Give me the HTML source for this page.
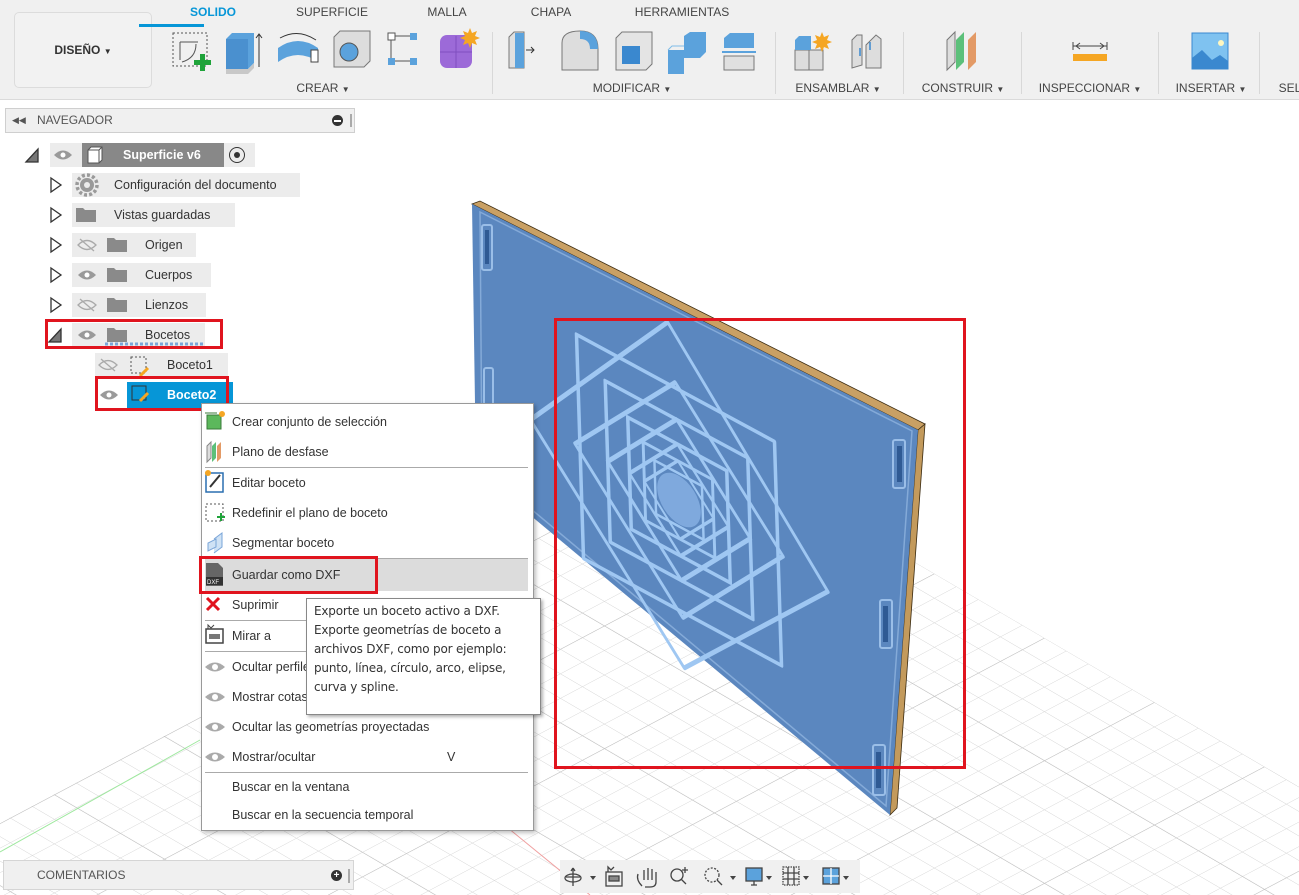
<!DOCTYPE html>
<html><head><meta charset="utf-8">
<style>
*{margin:0;padding:0;box-sizing:border-box}
body{width:1299px;height:895px;overflow:hidden;background:#fff;font-family:"Liberation Sans",Arial,sans-serif;color:#3c3c3c;position:relative}
.abs{position:absolute}
#tb{left:0;top:0;width:1299px;height:100px;background:#f0f0f0;border-bottom:1px solid #dadada}
.tab{position:absolute;top:5px;font-size:12px;color:#444;transform:translateX(-50%)}
.grp{position:absolute;top:81px;font-size:12px;color:#444;transform:translateX(-50%);white-space:nowrap}
.sep{position:absolute;top:32px;width:1px;height:62px;background:#d8d8d8}
.row{position:absolute;height:24px;background:#ececec;font-size:12.5px;line-height:24px;color:#333}
.mi{position:absolute;left:232px;font-size:12.5px;color:#333;transform:translateY(-50%)}
.ms{position:absolute;left:205px;width:323px;height:1px;background:#aaa}
.red{position:absolute;border:3px solid #e0141e}
</style></head><body>

<!-- viewport -->
<svg class="abs" style="left:0;top:0" width="1299" height="895">
<defs>
<pattern id="g" width="22" height="22" patternUnits="userSpaceOnUse" patternTransform="matrix(1,0.585,1,-0.53,714,445)">
<path d="M0 0H22M0 0V22" stroke="#d2d2d2" stroke-width="0.8" fill="none"/>
</pattern>
<pattern id="g2" width="110" height="110" patternUnits="userSpaceOnUse" patternTransform="matrix(1,0.585,1,-0.53,714,445)">
<path d="M0 0H110M0 0V110" stroke="#bdbdbd" stroke-width="1" fill="none"/>
</pattern>
</defs>
<polygon points="714,445 1299,787 1299,895 0,895 0,823" fill="url(#g)"/>
<polygon points="714,445 1299,787 1299,895 0,895 0,823" fill="url(#g2)"/>
<line x1="0" y1="852" x2="200" y2="740" stroke="#9ee89e" stroke-width="1"/>
<line x1="508" y1="828" x2="590" y2="895" stroke="#f0a0a0" stroke-width="1"/>
<!-- panel -->
<polygon points="472,204 480,201 925,424 918,430" fill="#c9a064" stroke="#3a2a10" stroke-width="0.8"/>
<polygon points="918,430 925,424 897,808 890,815" fill="#c39a5c" stroke="#3a2a10" stroke-width="0.8"/>
<polygon points="472,204 918,430 890,815 476,470" fill="#5b87bf"/>
<polygon points="480,212 912,431 886,806 482,468" fill="none" stroke="#8fb3de" stroke-width="1.5" opacity="0.8"/>
<g fill="none" stroke="#a6c8ee" stroke-width="2" opacity="0.85">
<rect x="482" y="225" width="10" height="45" rx="2"/><rect x="484" y="368" width="9" height="40" rx="2"/>
<rect x="893" y="440" width="12" height="48" rx="2"/><rect x="880" y="600" width="12" height="48" rx="2"/><rect x="873" y="745" width="12" height="50" rx="2"/>
</g>
<g fill="#2f5a94"><rect x="485" y="230" width="4" height="34"/><rect x="897" y="446" width="5" height="36"/><rect x="883" y="606" width="5" height="36"/><rect x="876" y="752" width="5" height="36"/></g>
<g transform="matrix(0.99,0.535,0.035,1.12,679,500)" fill="none" stroke="#9fc7f2" stroke-width="3.6" stroke-linejoin="round">
<rect x="-100" y="-100" width="200" height="200"/>
<polygon points="-6,-156 150,10 0,150 -150,0"/>
<rect x="-72" y="-72" width="144" height="144"/>
<polygon points="0,-105 105,0 0,105 -105,0"/>
<rect x="-50" y="-50" width="100" height="100"/>
<polygon points="0,-72 72,0 0,72 -72,0"/>
<rect x="-35" y="-35" width="70" height="70" stroke-width="3"/>
<polygon points="0,-50 50,0 0,50 -50,0" stroke-width="3"/>
<rect x="-24" y="-24" width="48" height="48" stroke-width="2.5"/>
<polygon points="0,-35 35,0 0,35 -35,0" stroke-width="2.5"/>
<circle r="22" fill="#8fb8ea" stroke="none" opacity="0.7"/>
</g>
</svg>

<!-- toolbar -->
<div id="tb" class="abs">
<div class="abs" style="left:14px;top:12px;width:138px;height:76px;border:1px solid #dcdcdc;border-radius:5px;background:#f2f2f2;font-size:12px;font-weight:bold;line-height:74px;text-align:center;color:#333">DISEÑO <span style="font-size:8px">▼</span></div>
<div class="tab" style="left:213px;color:#0696d7;font-weight:bold">SOLIDO</div>
<div class="abs" style="left:139px;top:24px;width:65px;height:3px;background:#0696d7"></div>
<div class="tab" style="left:332px">SUPERFICIE</div>
<div class="tab" style="left:447px">MALLA</div>
<div class="tab" style="left:551px">CHAPA</div>
<div class="tab" style="left:682px">HERRAMIENTAS</div>
<div class="grp" style="left:323px">CREAR <span style="font-size:8px">▼</span></div>
<div class="grp" style="left:632px">MODIFICAR <span style="font-size:8px">▼</span></div>
<div class="grp" style="left:838px">ENSAMBLAR <span style="font-size:8px">▼</span></div>
<div class="grp" style="left:963px">CONSTRUIR <span style="font-size:8px">▼</span></div>
<div class="grp" style="left:1090px">INSPECCIONAR <span style="font-size:8px">▼</span></div>
<div class="grp" style="left:1211px">INSERTAR <span style="font-size:8px">▼</span></div>
<div class="grp" style="left:1290px">SEL</div>
<div class="sep" style="left:492px"></div><div class="sep" style="left:775px"></div><div class="sep" style="left:903px"></div><div class="sep" style="left:1021px"></div><div class="sep" style="left:1158px"></div><div class="sep" style="left:1259px"></div>
<svg class="abs" style="left:0;top:0" width="1299" height="100">
<g stroke="#555" fill="none"><rect x="173" y="33" width="34" height="33" stroke-dasharray="2 2"/><path d="M180 42V60M180 42H198M196 44Q196 58 182 62"/></g>
<path d="M200 54h5v6h6v5h-6v6h-5v-6h-6v-5h6z" fill="#1fa33a"/>
<path d="M226 39l6-6h22v30l-6 6h-22z" fill="#5ba2dc"/><path d="M226 39h22v30h-22z" fill="#4a90cf"/><path d="M226 69h22l6-6v5l-6 6h-22z" fill="#c8c8c8"/><path d="M259 67V34m-3 4l3-4 3 4" stroke="#333" fill="none"/>
<path d="M278 48q20-14 40 0v14q-20-14-40 0z" fill="#5ba2dc"/><path d="M280 38q18-10 36 2" stroke="#333" fill="none"/><rect x="311" y="50" width="7" height="12" fill="#fff" stroke="#444"/>
<path d="M334 37l6-6h30v30l-6 6h-30z" fill="#ddd" stroke="#777"/><circle cx="349" cy="52" r="9" fill="#5ba2dc" stroke="#555"/>
<g fill="#5ba2dc"><rect x="410" y="33" width="7" height="7"/><rect x="388" y="58" width="7" height="7"/><rect x="410" y="58" width="7" height="7"/></g><rect x="388" y="33" width="7" height="7" fill="#fff" stroke="#555"/><path d="M395 36h15M395 61h15M391 40v18" stroke="#555"/>
<rect x="440" y="35" width="32" height="33" rx="7" fill="#9c6ad8"/><path d="M440 52h32M456 36v32" stroke="#7f4fbf"/><path d="M470 28l2 5 5-2-2 5 5 2-5 2 2 5-5-2-2 5-2-5-5 2 2-5-5-2 5-2-2-5 5 2z" fill="#f5a623"/>
<path d="M509 37l5-5h10v36h-15z" fill="#e0e0e0" stroke="#777"/><rect x="515" y="33" width="9" height="35" fill="#5ba2dc"/><path d="M526 50h8m-3-3l3 3-3 3" stroke="#333" fill="none"/>
<path d="M562 70V43q0-12 18-12q18 0 18 18v21z" fill="#ddd" stroke="#777"/><path d="M580 31q18 0 18 18h-8q0-10-10-10z" fill="#5ba2dc"/>
<path d="M616 38l6-6h30v32l-6 6h-30z" fill="#e4e4e4" stroke="#777"/><rect x="622" y="46" width="18" height="18" fill="#3a88cf"/>
<path d="M668 50h16v-14l6-4h16v20l-6 6h-16v16h-16z" fill="#5ba2dc"/><path d="M668 50l4-4h12" stroke="#7fbde8" fill="none"/>
<path d="M724 38l6-5h24v15h-30z" fill="#5ba2dc"/><path d="M722 52h34" stroke="#5ba2dc" stroke-width="2"/><path d="M724 56h30v14h-30z" fill="#e0e0e0" stroke="#777"/>
<rect x="795" y="50" width="14" height="20" fill="#ddd" stroke="#777"/><rect x="809" y="50" width="14" height="20" fill="#ddd" stroke="#777"/><path d="M795 40l4-4h12v14h-16z" fill="#5ba2dc"/><path d="M822 32l2 5 5-2-2 5 5 2-5 2 2 5-5-2-2 5-2-5-5 2 2-5-5-2 5-2-2-5 5 2z" fill="#f5a623"/>
<path d="M852 68V40l5-5h5v30zM866 45l10-10 5 4v29h-15z" fill="#ddd" stroke="#777"/><path d="M860 48v8M870 42v8" stroke="#3a88cf" stroke-width="1.5"/>
<path d="M947 70V40l8-8v30z" fill="#ddd" stroke="#777"/><path d="M956 70V40l8-8v30z" fill="#5cc07a"/><path d="M968 70V40l8-8v30z" fill="#e39a66"/>
<path d="M1073 46h34M1073 42v8M1107 42v8M1076 46l4-3M1076 46l4 3M1104 46l-4-3M1104 46l-4 3" stroke="#444" fill="none"/><rect x="1073" y="54" width="34" height="7" fill="#f5a623"/>
<rect x="1192" y="33" width="36" height="36" fill="#7fc2f0" stroke="#3a88cf"/><path d="M1192 69V58l10-8 10 10 8-5 8 6v8z" fill="#3a88cf"/><circle cx="1221" cy="43" r="3" fill="#fff7c0"/>
</svg>
</div>

<!-- navigator -->
<div class="abs" style="left:5px;top:108px;width:350px;height:25px;background:#f0f0f0;border:1px solid #cfcfcf;font-size:12px;line-height:23px;color:#555">
<span style="position:absolute;left:6px;font-size:9px">◀◀</span><span style="position:absolute;left:31px">NAVEGADOR</span>
<span style="position:absolute;left:326px;top:6px;width:11px;height:11px;border-radius:50%;background:#333"></span><span style="position:absolute;left:328px;top:11px;width:7px;height:1.5px;background:#fff"></span>
<span style="position:absolute;left:344px;top:5px;width:2px;height:13px;background:#aaa"></span></div>

<svg class="abs" style="left:0;top:140px" width="300" height="280">
<g fill="none" stroke="#333" stroke-width="1.3">
<path d="M26 22L38 9V22Z" fill="#777"/>
<path d="M51 38l10 7-10 7z"/><path d="M51 68l10 7-10 7z"/><path d="M51 98l10 7-10 7z"/><path d="M51 128l10 7-10 7z"/><path d="M51 158l10 7-10 7z"/>
<path d="M49 202L61 189V202Z" fill="#777"/>
</g>
</svg>
<div class="row" style="left:50px;top:143px;width:205px"></div>
<div class="abs" style="left:82px;top:143px;width:142px;height:24px;background:#888;color:#fff;font-weight:bold;font-size:12.5px;line-height:24px;padding-left:41px">Superficie v6</div>
<svg class="abs" style="left:84px;top:144px" width="22" height="22"><path d="M4 6l3-3h11v13l-3 3H4z" fill="#fff" stroke="#555"/><path d="M4 6h11v13M15 6l3-3" stroke="#555" fill="none"/></svg>
<div class="abs" style="left:229px;top:147px;width:16px;height:16px;border-radius:50%;border:1.5px solid #333"></div><div class="abs" style="left:234px;top:152px;width:6px;height:6px;border-radius:50%;background:#333"></div>
<div class="row" style="left:72px;top:173px;width:228px;padding-left:42px">Configuración del documento</div>
<div class="row" style="left:72px;top:203px;width:163px;padding-left:42px">Vistas guardadas</div>
<div class="row" style="left:72px;top:233px;width:124px;padding-left:73px">Origen</div>
<div class="row" style="left:72px;top:263px;width:139px;padding-left:73px">Cuerpos</div>
<div class="row" style="left:72px;top:293px;width:134px;padding-left:73px">Lienzos</div>
<div class="row" style="left:72px;top:323px;width:133px;padding-left:73px">Bocetos</div>
<div class="row" style="left:95px;top:353px;width:133px;padding-left:72px">Boceto1</div>
<div class="abs" style="left:127px;top:382px;width:106px;height:26px;background:#0696d7;color:#fff;font-weight:bold;font-size:12.5px;line-height:26px;padding-left:40px">Boceto2</div>
<svg class="abs" style="left:0;top:140px" width="300" height="280">
<circle cx="87" cy="45" r="7" fill="#9a9a9a"/><circle cx="87" cy="45" r="10" fill="none" stroke="#9a9a9a" stroke-width="3.5" stroke-dasharray="3 2.2"/><circle cx="87" cy="45" r="3" fill="#ececec"/>
<g fill="#8a8a8a"><path d="M76 68h7l2 2h11v12h-20z"/><path d="M107 128h7l2 2h11v12h-20z"/><path d="M107 158h7l2 2h11v12h-20z"/><path d="M107 98h7l2 2h11v12h-20z"/><path d="M107 188h7l2 2h11v12h-20z"/></g>
<g fill="#9a9a9a"><path d="M54 15q9-9 18 0q-9 9-18 0z"/><path d="M78 135q9-9 18 0q-9 9-18 0z"/><path d="M78 195q9-9 18 0q-9 9-18 0z"/><path d="M100 255q9-9 18 0q-9 9-18 0z"/></g>
<g fill="#fff"><circle cx="63" cy="15" r="2.5"/><circle cx="87" cy="135" r="2.5"/><circle cx="87" cy="195" r="2.5"/><circle cx="109" cy="255" r="2.5"/></g>
<g fill="none" stroke="#aaa" stroke-width="1.3"><path d="M78 105q9-9 18 0q-9 9-18 0zM80 99l14 12"/><path d="M78 165q9-9 18 0q-9 9-18 0zM80 159l14 12"/><path d="M99 225q9-9 18 0q-9 9-18 0zM101 219l14 12"/></g>
<path d="M105 204h100" stroke="#7aa5d8" stroke-width="3" stroke-dasharray="3 2"/>
<rect x="131" y="217" width="15" height="16" fill="none" stroke="#555" stroke-dasharray="2 2"/><path d="M140 236l8-8" stroke="#f5a623" stroke-width="3"/>
<rect x="132" y="246" width="14" height="14" fill="none" stroke="#333"/><path d="M140 261l8-8" stroke="#f5a623" stroke-width="3"/>
</svg>
<div class="red" style="left:45px;top:319px;width:178px;height:30px"></div>
<div class="red" style="left:95px;top:376px;width:134px;height:35px"></div>

<!-- context menu -->
<div class="abs" style="left:201px;top:403px;width:333px;height:428px;background:#fff;border:1px solid #999;box-shadow:2px 2px 4px rgba(0,0,0,.25)"></div>
<div class="abs" style="left:205px;top:559px;width:323px;height:32px;background:#dcdcdc"></div>
<div class="ms" style="top:467px"></div><div class="ms" style="top:558px"></div><div class="ms" style="top:620px"></div><div class="ms" style="top:651px"></div><div class="ms" style="top:772px"></div>
<div class="mi" style="top:422px">Crear conjunto de selección</div>
<div class="mi" style="top:452px">Plano de desfase</div>
<div class="mi" style="top:483px">Editar boceto</div>
<div class="mi" style="top:513px">Redefinir el plano de boceto</div>
<div class="mi" style="top:543px">Segmentar boceto</div>
<div class="mi" style="top:575px">Guardar como DXF</div>
<div class="mi" style="top:605px">Suprimir</div>
<div class="mi" style="top:636px">Mirar a</div>
<div class="mi" style="top:667px">Ocultar perfiles</div>
<div class="mi" style="top:697px">Mostrar cotas</div>
<div class="mi" style="top:727px">Ocultar las geometrías proyectadas</div>
<div class="mi" style="top:757px">Mostrar/ocultar</div>
<div class="mi" style="top:757px;left:447px">V</div>
<div class="mi" style="top:787px">Buscar en la ventana</div>
<div class="mi" style="top:815px">Buscar en la secuencia temporal</div>
<svg class="abs" style="left:200px;top:405px" width="35" height="400">
<rect x="7" y="10" width="14" height="14" fill="#5cb85c" stroke="#3a7a3a"/><path d="M5 8h12" stroke="#3a7a3a"/><circle cx="22" cy="9" r="3" fill="#f5a623"/>
<path d="M7 57V41l4-4v16z" fill="#ddd" stroke="#888"/><path d="M12 57V41l4-4v16z" fill="#5cc07a"/><path d="M17 57V41l4-4v16z" fill="#e39a66"/>
<rect x="6" y="68" width="17" height="19" fill="#fff" stroke="#2a6fb0" stroke-width="1.5"/><path d="M10 82l10-12" stroke="#333" stroke-width="2"/><circle cx="8" cy="68" r="3" fill="#f5a623"/>
<rect x="6" y="99" width="17" height="17" fill="none" stroke="#555" stroke-dasharray="2 2"/><path d="M17 112h8M21 108v8" stroke="#1fa33a" stroke-width="2"/>
<path d="M8 146v-8l8-4v8zM14 134l8-6v14l-8 6" fill="#cfe2f5" stroke="#7aa5d8"/>
<path d="M6 158h12l5 5v18h-17z" fill="#666"/><rect x="6" y="172" width="17" height="8" fill="#333"/><text x="7" y="179" font-size="6" fill="#fff" font-family="Liberation Sans">DXF</text>
<path d="M7 193l12 12M19 193l-12 12" stroke="#e0141e" stroke-width="3"/>
<rect x="6" y="224" width="17" height="14" fill="#fff" stroke="#444" stroke-width="1.5"/><rect x="9" y="229" width="11" height="5" fill="#777"/><path d="M8 224v-4l3 3 3-3" stroke="#444" fill="none"/>
<g fill="#aaa"><path d="M5 262q10-9 20 0q-10 9-20 0z"/><path d="M5 292q10-9 20 0q-10 9-20 0z"/><path d="M5 322q10-9 20 0q-10 9-20 0z"/><path d="M5 352q10-9 20 0q-10 9-20 0z"/></g>
<g fill="#fff"><circle cx="15" cy="262" r="3"/><circle cx="15" cy="292" r="3"/><circle cx="15" cy="322" r="3"/><circle cx="15" cy="352" r="3"/></g>
</svg>
<div class="red" style="left:199px;top:556px;width:179px;height:38px"></div>

<!-- tooltip -->
<div class="abs" style="left:306px;top:598px;width:235px;height:117px;background:#fff;border:1px solid #888;box-shadow:2px 2px 3px rgba(0,0,0,.3);padding:3px 0 0 7px;font-family:'DejaVu Sans',sans-serif;font-size:12px;line-height:19px;color:#333;white-space:nowrap;letter-spacing:-0.2px">Exporte un boceto activo a DXF.<br>Exporte geometrías de boceto a<br>archivos DXF, como por ejemplo:<br>punto, línea, círculo, arco, elipse,<br>curva y spline.</div>

<div class="red" style="left:554px;top:318px;width:412px;height:451px"></div>

<!-- bottom -->
<div class="abs" style="left:3px;top:860px;width:351px;height:30px;background:#f0f0f0;border:1px solid #d5d5d5;font-size:12px;line-height:29px;color:#555;padding-left:33px">COMENTARIOS
<span style="position:absolute;left:327px;top:9px;width:11px;height:11px;border-radius:50%;background:#333;color:#fff;font-size:10px;line-height:11px;text-align:center;font-weight:bold">+</span>
<span style="position:absolute;left:344px;top:8px;width:2px;height:14px;background:#aaa"></span></div>
<div class="abs" style="left:560px;top:860px;width:300px;height:33px;background:#f0f0f0"></div>
<svg class="abs" style="left:560px;top:860px" width="300" height="33">
<g stroke="#444" fill="none" stroke-width="1.3">
<path d="M13 8v18M6 17h14M13 8l-2 3M13 8l2 3"/><ellipse cx="13" cy="18" rx="8" ry="4"/>
<rect x="46" y="12" width="16" height="14"/><rect x="49" y="16" width="10" height="5" fill="#888"/><path d="M48 12V7l3 3 3-3"/>
<path d="M82 26q-6-6-4-12M84 10v10M88 8v12M92 9v11M96 12v10q0 5-6 5h-5"/>
<circle cx="117" cy="15" r="6"/><path d="M121 19l5 5M125 7v6M122 10h6"/>
<circle cx="152" cy="15" r="7" stroke-dasharray="2 1.5"/><path d="M157 20l5 5"/>
<rect x="186" y="8" width="16" height="13" fill="#5ba2dc"/><path d="M191 25h6M194 21v4"/>
<rect x="223" y="7" width="16" height="18" stroke-dasharray="1.5 1"/><path d="M223 13h16M223 19h16M228 7v18M234 7v18"/>
<rect x="263" y="8" width="16" height="16" fill="#5ba2dc"/><path d="M263 16h16M271 8v16" stroke="#fff"/>
</g>
<g fill="#444"><path d="M30 16h6l-3 4z"/><path d="M170 16h6l-3 4z"/><path d="M206 16h6l-3 4z"/><path d="M243 16h6l-3 4z"/><path d="M283 16h6l-3 4z"/></g>
</svg>
</body></html>
